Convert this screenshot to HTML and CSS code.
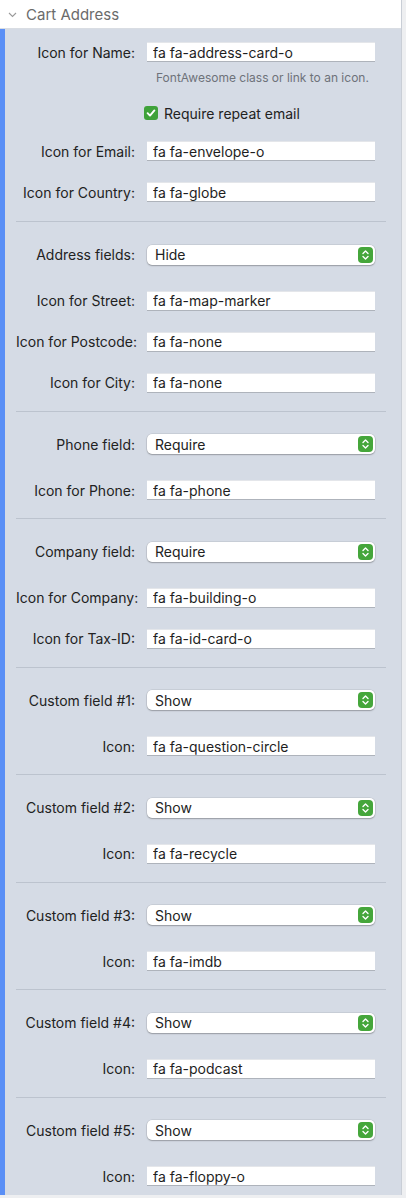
FILE: index.html
```html
<!DOCTYPE html>
<html lang="en">

<head>
    <meta charset="UTF-8">
    <meta name="viewport" content="width=device-width, initial-scale=1.0">
    <title>Cart Address</title>
    <link rel="stylesheet" href="styles.css">
</head>

<body>

    <div id="settings">
        <div class="section-head">
            <svg class="chevron" width="9" height="6" viewBox="0 0 9 6"><path d="M1 1 L4.5 4.5 L8 1" fill="none" stroke="#9a9a9a" stroke-width="1.1"/></svg>
            <span>Cart Address</span>
        </div>

        <div class="panel">
            <div class="form">

                <!-- Name / email / country -->
                <div class="group first">
                    <div class="row">
                        <label>Icon for Name:</label>
                        <input type="text" value="fa fa-address-card-o">
                    </div>
                    <div class="hint">FontAwesome class or link to an icon.</div>
                    <div class="check-row">
                        <span class="check"><svg width="10" height="10" viewBox="0 0 10 10"><path d="M1.6 5.2 L4 7.6 L8.4 2.4" fill="none" stroke="#fff" stroke-width="1.9" stroke-linecap="round" stroke-linejoin="round"/></svg></span>
                        <span>Require repeat email</span>
                    </div>
                    <div class="row">
                        <label>Icon for Email:</label>
                        <input type="text" value="fa fa-envelope-o">
                    </div>
                    <div class="row next">
                        <label>Icon for Country:</label>
                        <input type="text" value="fa fa-globe">
                    </div>
                </div>

                <!-- Address -->
                <div class="group">
                    <div class="row">
                        <label>Address fields:</label>
                        <div class="select"><span>Hide</span><span class="stepper"></span></div>
                    </div>
                    <div class="row after-select">
                        <label>Icon for Street:</label>
                        <input type="text" value="fa fa-map-marker">
                    </div>
                    <div class="row next">
                        <label>Icon for Postcode:</label>
                        <input type="text" value="fa fa-none">
                    </div>
                    <div class="row next">
                        <label>Icon for City:</label>
                        <input type="text" value="fa fa-none">
                    </div>
                </div>

                <!-- Phone -->
                <div class="group">
                    <div class="row">
                        <label>Phone field:</label>
                        <div class="select"><span>Require</span><span class="stepper"></span></div>
                    </div>
                    <div class="row after-select">
                        <label>Icon for Phone:</label>
                        <input type="text" value="fa fa-phone">
                    </div>
                </div>

                <!-- Company -->
                <div class="group">
                    <div class="row">
                        <label>Company field:</label>
                        <div class="select"><span>Require</span><span class="stepper"></span></div>
                    </div>
                    <div class="row after-select">
                        <label>Icon for Company:</label>
                        <input type="text" value="fa fa-building-o">
                    </div>
                    <div class="row next">
                        <label>Icon for Tax-ID:</label>
                        <input type="text" value="fa fa-id-card-o">
                    </div>
                </div>

                <!-- Custom fields -->
                <div class="group">
                    <div class="row">
                        <label>Custom field #1:</label>
                        <div class="select"><span>Show</span><span class="stepper"></span></div>
                    </div>
                    <div class="row after-select">
                        <label>Icon:</label>
                        <input type="text" value="fa fa-question-circle">
                    </div>
                </div>

                <div class="group">
                    <div class="row">
                        <label>Custom field #2:</label>
                        <div class="select"><span>Show</span><span class="stepper"></span></div>
                    </div>
                    <div class="row after-select">
                        <label>Icon:</label>
                        <input type="text" value="fa fa-recycle">
                    </div>
                </div>

                <div class="group">
                    <div class="row">
                        <label>Custom field #3:</label>
                        <div class="select"><span>Show</span><span class="stepper"></span></div>
                    </div>
                    <div class="row after-select">
                        <label>Icon:</label>
                        <input type="text" value="fa fa-imdb">
                    </div>
                </div>

                <div class="group">
                    <div class="row">
                        <label>Custom field #4:</label>
                        <div class="select"><span>Show</span><span class="stepper"></span></div>
                    </div>
                    <div class="row after-select">
                        <label>Icon:</label>
                        <input type="text" value="fa fa-podcast">
                    </div>
                </div>

                <div class="group last">
                    <div class="row">
                        <label>Custom field #5:</label>
                        <div class="select"><span>Show</span><span class="stepper"></span></div>
                    </div>
                    <div class="row after-select">
                        <label>Icon:</label>
                        <input type="text" value="fa fa-floppy-o">
                    </div>
                </div>

            </div>
        </div>
    </div>

</body>

</html>
```

FILE: styles.css
```css
body {
    margin: 0;
    background-color: #eeeff1;
    font-family: Inter, "Noto Sans", sans-serif;
    font-size: 14px;
    color: #222;
}

#settings {
    width: 401px;
    border-right: 1px solid #c9ced6;
}

/* Collapsible header */
.section-head {
    height: 28px;
    display: flex;
    align-items: center;
    gap: 9px;
    padding-left: 8px;
    background-color: #fff;
    border-bottom: 1px solid #d9dde3;
    color: #6b6b6b;
    font-size: 15px;
}

.chevron {
    margin-top: 1px;
}

/* Blue-edged panel */
.panel {
    background-color: #d5dbe5;
    border-left: 5px solid #5a8ff6;
    padding-bottom: 9px;
}

.form {
    margin: 0 15px 0 11px;
}

.group {
    padding: 22.5px 0 18px;
    border-bottom: 1px solid #bcc3ce;
}

.group.first {
    padding-top: 13px;
    padding-bottom: 19px;
}

.group.last {
    border-bottom: none;
    padding-bottom: 0;
}

/* Label / field rows */
.row {
    display: grid;
    grid-template-columns: 119px 228px;
    column-gap: 12px;
    align-items: center;
    height: 20px;
}

.row.next {
    margin-top: 21px;
}

.row.after-select {
    margin-top: 26px;
}

label {
    text-align: right;
    white-space: nowrap;
}

input[type="text"] {
    box-sizing: border-box;
    width: 228px;
    height: 20px;
    margin: 0;
    padding: 0 6px;
    border: none;
    border-top: 1px solid #e4e6ea;
    border-bottom: 1px solid #aeb3bb;
    background-color: #fff;
    font-family: inherit;
    font-size: 14px;
    color: #1e1e1e;
}

.select {
    box-sizing: border-box;
    width: 228px;
    height: 20px;
    display: flex;
    align-items: center;
    justify-content: space-between;
    padding: 0 2px 0 8px;
    background-color: #fff;
    border-radius: 5px;
    box-shadow: 0 0 0 0.5px rgba(0, 0, 0, 0.12), 0 1px 1.5px rgba(0, 0, 0, 0.25);
}

.stepper {
    width: 15px;
    height: 16px;
    border-radius: 4px;
    background-color: #45a63b;
    background-image: url("data:image/svg+xml;utf8,<svg xmlns='http://www.w3.org/2000/svg' width='15' height='16' viewBox='0 0 15 16'><path d='M5 6.5 L7.5 4 L10 6.5 M5 9.5 L7.5 12 L10 9.5' fill='none' stroke='white' stroke-width='1.4' stroke-linecap='round' stroke-linejoin='round'/></svg>");
}

/* Help text under the name field */
.hint {
    margin: 8px 0 0 140px;
    font-size: 12px;
    color: #6e727a;
}

/* Checkbox row */
.check-row {
    display: flex;
    align-items: center;
    gap: 6px;
    margin: 20px 0 0 128px;
    height: 16px;
}

.check {
    width: 14px;
    height: 14px;
    border-radius: 3px;
    background-color: #3fa23a;
    display: flex;
    align-items: center;
    justify-content: center;
}

.check-row + .row {
    margin-top: 20px;
}
```
